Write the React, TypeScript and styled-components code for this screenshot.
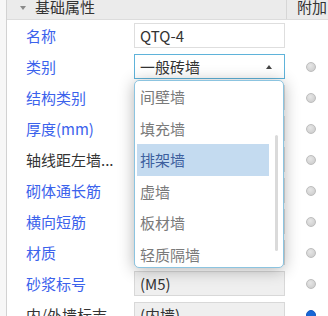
import React from 'react'
import styled, { createGlobalStyle } from 'styled-components'

const GlobalStyle = createGlobalStyle`
  html, body {
    margin: 0;
    padding: 0;
    background: #f7f7f7;
    overflow: hidden;
    height: 316px;
  }
  body {
    font-family: 'Noto Sans CJK SC', 'Noto Sans', sans-serif;
    font-size: 15px;
  }
`

const Panel = styled.div`
  margin-left: 6px;
  width: 321px;
  background: #fff;
  border-left: 1px solid #d2d2d2;
`

const Header = styled.div`
  display: grid;
  grid-template-columns: 280px 41px;
  height: 19px;
  background: #ebebeb;
  border-bottom: 1px solid #dcdcdc;
  color: #333;
  line-height: 13px;
`

const HeaderCell = styled.div<{ $divider?: boolean }>`
  display: flex;
  align-items: flex-start;
  gap: 9px;
  padding-left: ${(p) => (p.$divider ? '13px' : '10px')};
  border-right: ${(p) => (p.$divider ? '1px solid #d6d6d6' : '0')};
  overflow: hidden;
  white-space: nowrap;
`

const Caret = styled.span`
  margin-top: 6px;
  width: 0;
  height: 0;
  border-left: 3px solid transparent;
  border-right: 3px solid transparent;
  border-top: 4px solid #8a8a8a;
`

const Row = styled.div`
  display: grid;
  grid-template-columns: 127px 153px 41px;
  height: 31px;
  align-items: center;
`

const Label = styled.div<{ $plain?: boolean }>`
  padding-left: 19px;
  color: ${(p) => (p.$plain ? '#333' : '#3b62ec')};
  white-space: nowrap;
  overflow: hidden;
`

const ValueCell = styled.div`
  position: relative;
  height: 25px;
`

const Field = styled.div<{ $disabled?: boolean; $focus?: boolean }>`
  box-sizing: border-box;
  width: 151px;
  height: 25px;
  display: flex;
  align-items: center;
  justify-content: space-between;
  padding: 0 12px 0 5px;
  background: ${(p) => (p.$disabled ? '#efefef' : '#fff')};
  border: 1px solid ${(p) => (p.$focus ? '#5fb3da' : p.$disabled ? '#d8d8d8' : '#dedede')};
  color: #333;
  white-space: nowrap;
`

const UpArrow = styled.span`
  width: 0;
  height: 0;
  border-left: 3px solid transparent;
  border-right: 3px solid transparent;
  border-bottom: 4px solid #444;
`

const Dropdown = styled.div`
  position: absolute;
  top: 26px;
  left: 0;
  z-index: 5;
  box-sizing: border-box;
  width: 150px;
  height: 188px;
  display: flex;
  background: #fff;
  border: 1px solid #8cc4e0;
  border-radius: 5px;
  box-shadow: 0 2px 16px rgba(0, 0, 0, 0.3);
  overflow: hidden;
`

const OptionList = styled.div`
  flex: 1;
  padding-left: 2px;
`

const Option = styled.div<{ $active?: boolean }>`
  height: 31.5px;
  display: flex;
  align-items: center;
  padding-left: 3px;
  background: ${(p) => (p.$active ? '#c4dbf0' : 'transparent')};
  color: ${(p) => (p.$active ? '#3d5f9e' : '#7a7a7a')};
`

const ScrollTrack = styled.div`
  width: 14px;
  display: flex;
  justify-content: center;
`

const ScrollThumb = styled.div`
  margin-top: 54px;
  width: 3px;
  height: 116px;
  border-radius: 2px;
  background: #dadada;
`

const RadioCell = styled.div`
  padding-left: 19px;
  display: flex;
  align-items: center;
`

const Radio = styled.span<{ $on?: boolean }>`
  box-sizing: border-box;
  width: 10px;
  height: 10px;
  border-radius: 50%;
  background: ${(p) =>
    p.$on ? '#1766d6' : 'radial-gradient(circle at 40% 35%, #e6e6e6, #c9c9c9)'};
  border: 1px solid ${(p) => (p.$on ? '#1458c0' : '#bdbdbd')};
`

type Item = {
  label: string
  value?: string
  plain?: boolean
  disabled?: boolean
  radio?: 'off' | 'on'
  select?: boolean
}

// rows under the open list keep their boxes, their values are hidden by it
const items: Item[] = [
  { label: '名称', value: 'QTQ-4' },
  { label: '类别', value: '一般砖墙', radio: 'off', select: true },
  { label: '结构类别', radio: 'off' },
  { label: '厚度(mm)', radio: 'off' },
  { label: '轴线距左墙...', plain: true, radio: 'off' },
  { label: '砌体通长筋', radio: 'off' },
  { label: '横向短筋', radio: 'off' },
  { label: '材质', disabled: true, radio: 'off' },
  { label: '砂浆标号', value: '(M5)', disabled: true, radio: 'off' },
  { label: '内/外墙标志', value: '(内墙)', plain: true, disabled: true, radio: 'on' },
]

const options = ['间壁墙', '填充墙', '排架墙', '虚墙', '板材墙', '轻质隔墙']

export default function App() {
  return (
    <>
      <GlobalStyle />
      <Panel>
        <Header>
          <HeaderCell $divider>
            <Caret />
            <span>基础属性</span>
          </HeaderCell>
          <HeaderCell>附加</HeaderCell>
        </Header>
        {items.map((item) => (
          <Row key={item.label}>
            <Label $plain={item.plain}>{item.label}</Label>
            <ValueCell>
              <Field $disabled={item.disabled} $focus={item.select}>
                <span>{item.value}</span>
                {item.select && <UpArrow />}
              </Field>
              {item.select && (
                <Dropdown>
                  <OptionList>
                    {options.map((o) => (
                      <Option key={o} $active={o === '排架墙'}>
                        {o}
                      </Option>
                    ))}
                  </OptionList>
                  <ScrollTrack>
                    <ScrollThumb />
                  </ScrollTrack>
                </Dropdown>
              )}
            </ValueCell>
            <RadioCell>{item.radio && <Radio $on={item.radio === 'on'} />}</RadioCell>
          </Row>
        ))}
      </Panel>
    </>
  )
}
